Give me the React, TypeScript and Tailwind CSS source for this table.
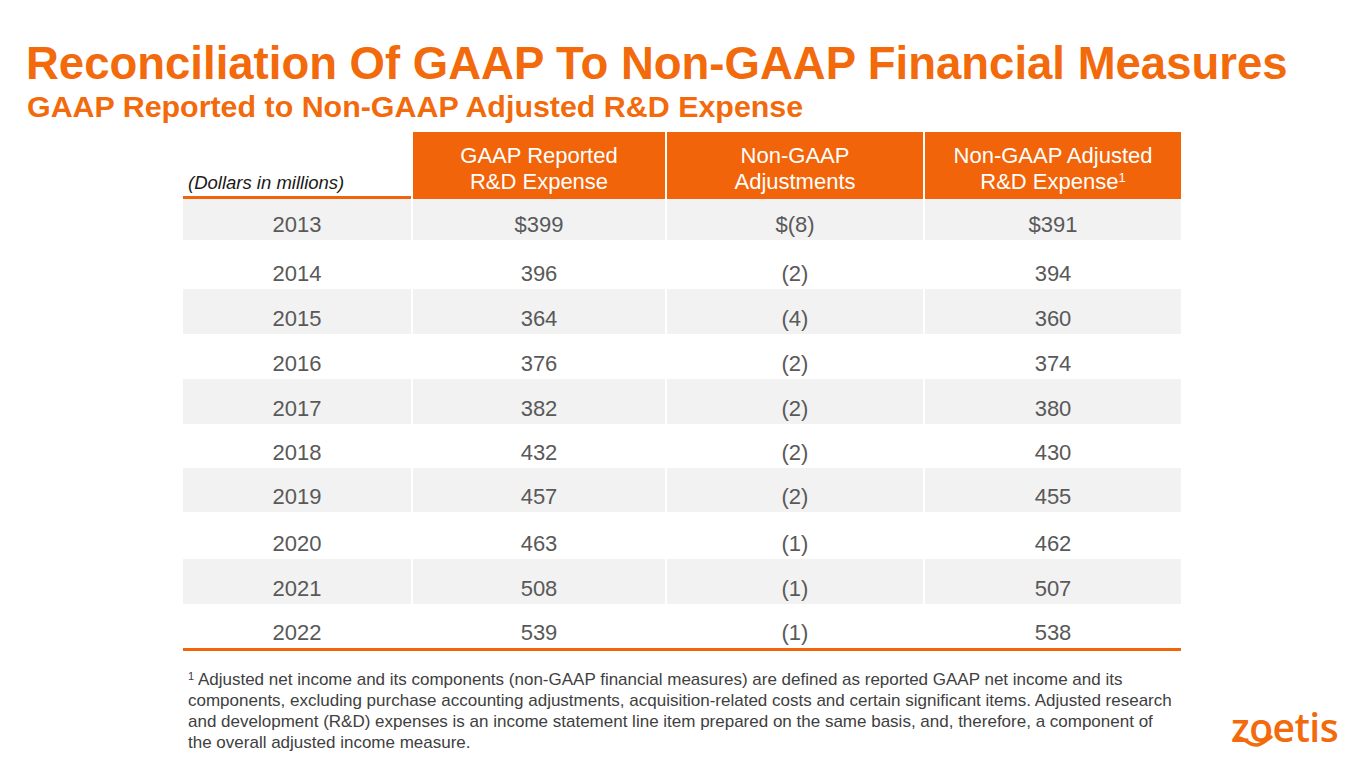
import React from "react";

const rows = [
  { year: "2013", gaap: "$399", adj: "$(8)", nonGaap: "$391", h: "h-[41px]" },
  { year: "2014", gaap: "396", adj: "(2)", nonGaap: "394", h: "h-[49px]" },
  { year: "2015", gaap: "364", adj: "(4)", nonGaap: "360", h: "h-[45px]" },
  { year: "2016", gaap: "376", adj: "(2)", nonGaap: "374", h: "h-[45px]" },
  { year: "2017", gaap: "382", adj: "(2)", nonGaap: "380", h: "h-[45px]" },
  { year: "2018", gaap: "432", adj: "(2)", nonGaap: "430", h: "h-[44px]" },
  { year: "2019", gaap: "457", adj: "(2)", nonGaap: "455", h: "h-[44px]" },
  { year: "2020", gaap: "463", adj: "(1)", nonGaap: "462", h: "h-[47px]" },
  { year: "2021", gaap: "508", adj: "(1)", nonGaap: "507", h: "h-[45px]" },
  { year: "2022", gaap: "539", adj: "(1)", nonGaap: "538", h: "h-[44px]" },
];

const cols = "grid grid-cols-[228px_252px_256px_256px] gap-x-[2px]";

const HeaderCell = ({ children }: { children: React.ReactNode }) => (
  <div className="flex flex-col items-center justify-center bg-[#f26409] pt-[6px] text-center text-[22px] leading-[26px] text-white">
    {children}
  </div>
);

const ZoetisLogo = () => (
  <div className="relative h-[44px] w-[110px]">
    <span className="absolute left-0 top-[-11px] font-['Open_Sans',sans-serif] text-[39px] font-semibold tracking-[-0.5px] text-[#f26a0c]">
      zoetis
    </span>
    <svg
      className="absolute left-[4px] top-[26px]"
      width="40"
      height="13"
      viewBox="0 0 40 13"
      fill="none"
    >
      <path
        d="M2 3 C 10 2, 14 11, 22 10 C 28 9, 31 5, 36 2"
        stroke="#f26a0c"
        strokeWidth="3.4"
        strokeLinecap="round"
      />
    </svg>
  </div>
);

export default function App() {
  return (
    <div className="relative h-[768px] w-[1365px] overflow-hidden bg-white font-['Liberation_Sans',Arial,sans-serif]">
      <div className="pl-[26px] pt-[39px]">
        <h1 className="text-[45.5px] font-bold leading-[50px] text-[#f26a0c]">
          Reconciliation Of GAAP To Non-GAAP Financial Measures
        </h1>
        <h2 className="pl-[1px] text-[30.4px] font-bold leading-[34px] text-[#f26a0c]">
          GAAP Reported to Non-GAAP Adjusted R&amp;D Expense
        </h2>
      </div>

      <div className="ml-[183px] mt-[9px] w-[998px]">
        <div className={`${cols} h-[67px]`}>
          <div className="flex items-end border-b-[3px] border-[#f26409] pb-[3px] pl-[5px] text-[18.5px] italic leading-[21px] text-[#1a1a1a]">
            (Dollars in millions)
          </div>
          <HeaderCell>
            <span>GAAP Reported</span>
            <span>R&amp;D Expense</span>
          </HeaderCell>
          <HeaderCell>
            <span>Non-GAAP</span>
            <span>Adjustments</span>
          </HeaderCell>
          <HeaderCell>
            <span>Non-GAAP Adjusted</span>
            <span>
              R&amp;D Expense<sup className="text-[13px]">1</sup>
            </span>
          </HeaderCell>
        </div>

        {rows.map((r, i) => (
          <div key={r.year} className={`${cols} ${r.h}`}>
            {[r.year, r.gaap, r.adj, r.nonGaap].map((v, j) => (
              <div
                key={j}
                className={`flex items-end justify-center pb-[3px] text-[22px] leading-[24px] text-[#595959] ${
                  i % 2 === 0 ? "bg-[#f2f2f2]" : "bg-white"
                }`}
              >
                {v}
              </div>
            ))}
          </div>
        ))}
        <div className="h-[3px] bg-[#f26409]" />
      </div>

      <div className="ml-[188px] mt-[18px] flex items-start">
        <p className="w-[1000px] whitespace-nowrap text-[17px] leading-[21px] text-[#404040]">
          <sup className="text-[11px]">1</sup> Adjusted net income and its components (non-GAAP financial measures) are
          defined as reported GAAP net income and its
          <br />
          components, excluding purchase accounting adjustments, acquisition-related costs and certain significant
          items. Adjusted research
          <br />
          and development (R&amp;D) expenses is an income statement line item prepared on the same basis, and,
          therefore, a component of
          <br />
          the overall adjusted income measure.
        </p>
        <div className="ml-[43px] mt-[40px]">
          <ZoetisLogo />
        </div>
      </div>
    </div>
  );
}
